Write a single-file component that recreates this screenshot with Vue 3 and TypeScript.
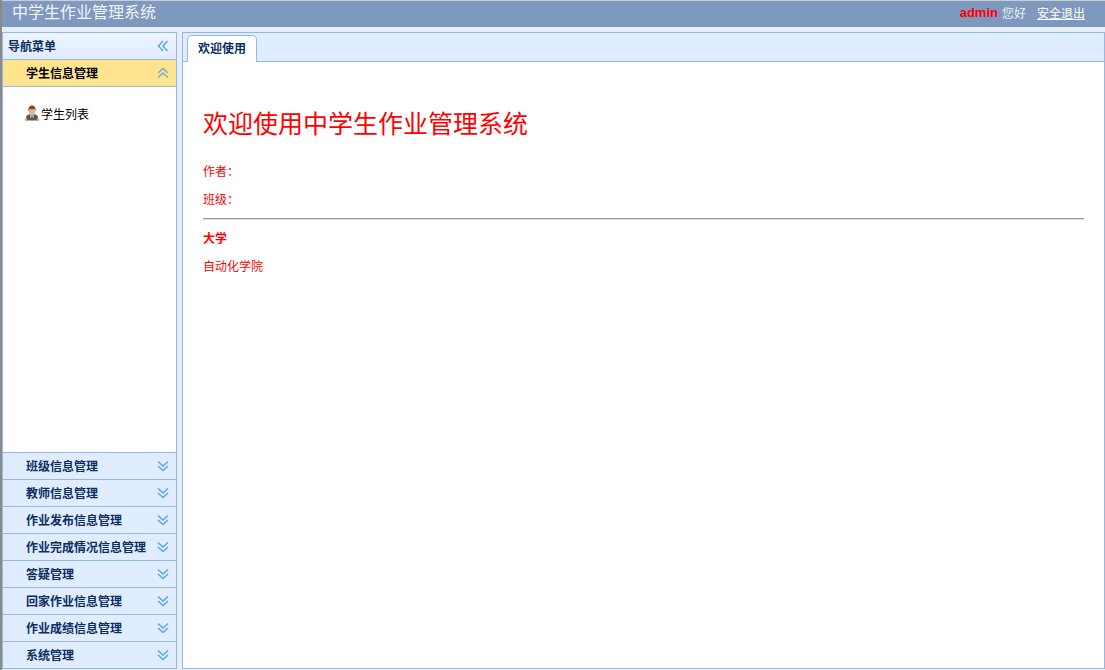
<script setup lang="ts">
const closedMenus: string[] = ['班级信息管理', '教师信息管理', '作业发布信息管理', '作业完成情况信息管理', '答疑管理', '回家作业信息管理', '作业成绩信息管理', '系统管理']
</script>

<template>
  <div class="page">
    <header class="top">
      <div class="brand">中学生作业管理系统</div>
      <div class="user"><b class="name">admin</b><span class="hello">您好</span><a class="logout">安全退出</a></div>
    </header>
    <div class="main">
      <aside class="west">
        <div class="west-title">
          <span>导航菜单</span>
          <svg class="chev" width="12" height="12" viewBox="0 0 12 12"><path d="M6 1 1.500 6 6 11M10.500 1 6 6l4.500 5" fill="none" stroke="#5aa6ea" stroke-width="1.500"/></svg>
        </div>
        <div class="acc-head open">
          <span>学生信息管理</span>
          <svg class="chev" width="12" height="12" viewBox="0 0 12 12"><path d="M1 6 6 1.500 11 6M1 10.500 6 6l5 4.500" fill="none" stroke="#6bb0cf" stroke-width="1.500"/></svg>
        </div>
        <div class="acc-body">
          <div class="tree-item">
            <svg class="person" width="16" height="16" viewBox="0 0 16 16">
              <path d="M2 15.500v-3C2 10.500 4 9.500 6 9h4c2 .5 4 1.500 4 3.500v3z" fill="#55565a"/>
              <path d="M5.200 9.300 6.800 14l1.200-3 1.200 3 1.600-4.700L9.500 9h-3z" fill="#a5a7ab"/>
              <path d="M.8 15.500c-.3-1.300.3-2.600 1.700-3l1.200 3zM15.200 15.500c.3-1.300-.3-2.600-1.700-3l-1.200 3z" fill="#d6a57a"/>
              <path d="M5 4.500h6V7c0 1.700-1.300 3-3 3S5 8.700 5 7z" fill="#e7b48c"/>
              <path d="M4.500 7C3.900 2.500 5.500.5 8 .5s4.100 2 3.500 6.500c-.3-1.500-.8-2.600-1.500-3-1.200.7-3 .7-4 0-.7.5-1.200 1.500-1.500 3z" fill="#8a4a25"/>
            </svg>
            <span>学生列表</span>
          </div>
        </div>
        <div v-for="menu in closedMenus" :key="menu" class="acc-head">
          <span>{{ menu }}</span>
          <svg class="chev down" width="12" height="12" viewBox="0 0 12 12"><path d="M1 1.500 6 6l5-4.500M1 6l5 4.500L11 6" fill="none" stroke="#5aa6ea" stroke-width="1.500"/></svg>
        </div>
      </aside>
      <section class="center">
        <div class="tabs">
          <div class="tab">欢迎使用</div>
        </div>
        <div class="content">
          <h1>欢迎使用中学生作业管理系统</h1>
          <p>作者：</p>
          <p>班级：</p>
          <hr />
          <p class="bold">大学</p>
          <p>自动化学院</p>
        </div>
      </section>
    </div>
  </div>
</template>

<style>
html, body { margin: 0; padding: 0; overflow: hidden; }
</style>

<style scoped>
.page {
  width: 1105px;
  height: 670px;
  display: flex;
  flex-direction: column;
  background: #e6eef8;
  font-family: "Liberation Sans", "Noto Sans CJK SC", sans-serif;
  font-size: 12px;
  border-left: 2px solid #8a8a8a;
  box-sizing: border-box;
  overflow: hidden;
}
.top {
  height: 27px;
  flex: none;
  box-sizing: border-box;
  border-top: 1px solid #c8ced6;
  background: #7f99be;
  display: flex;
  justify-content: space-between;
  align-items: center;
  padding: 0 20px 2px 10px;
  color: #fff;
}
.brand { font-size: 16px; line-height: 20px; color: #f2f5fa; }
.user { display: flex; align-items: center; font-size: 13px; margin-top: -2px; }
.name { color: #f00; font-size: 13px; margin-right: 1px; }
.hello { margin-left: 3px; font-size: 12px; color: #eef2f8; }
.logout { margin-left: 11px; font-size: 12px; text-decoration: underline; color: #fff; }
.main {
  flex: 1;
  display: flex;
  gap: 5px;
  padding-top: 5px;
  min-height: 0;
}
.west {
  width: 175px;
  flex: none;
  box-sizing: border-box;
  border: 1px solid #95b8e7;
  height: 637px;
  display: flex;
  flex-direction: column;
  background: #fff;
}
.west-title {
  height: 26px;
  flex: none;
  box-sizing: border-box;
  background: linear-gradient(to bottom, #eff5ff, #e0ecff);
  display: flex;
  align-items: center;
  justify-content: space-between;
  padding: 0 7px 1px 5px;
  font-weight: bold;
  color: #0e2d5f;
}
.acc-head {
  height: 27px;
  flex: none;
  box-sizing: border-box;
  border-top: 1px solid #95b8e7;
  background: #e0ecff;
  display: flex;
  align-items: center;
  justify-content: space-between;
  padding: 0 7px 2px 23px;
  font-weight: bold;
  color: #0e2d5f;
}
.acc-head.open {
  background: #ffe48d;
  color: #000;
  border-bottom: 1px solid #95b8e7;
  height: 28px;
  padding-bottom: 1px;
}
.chev.down { margin-top: 2px; }
.acc-body {
  flex: 1;
  min-height: 0;
  padding-top: 17px;
  box-sizing: border-box;
}
.tree-item {
  display: flex;
  align-items: center;
  height: 18px;
  padding-left: 21px;
  gap: 1px;
  color: #000;
}
.center {
  width: 923px;
  flex: none;
  height: 637px;
  box-sizing: border-box;
  border: 1px solid #95b8e7;
  display: flex;
  flex-direction: column;
  background: #fff;
}
.tabs {
  height: 29px;
  flex: none;
  box-sizing: border-box;
  background: #e0ecff;
  border-bottom: 1px solid #95b8e7;
  padding: 2px 0 0 4px;
}
.tab {
  width: 70px;
  height: 27px;
  box-sizing: border-box;
  border: 1px solid #95b8e7;
  border-bottom: none;
  border-radius: 5px 5px 0 0;
  background: #fff;
  color: #0e2d5f;
  font-weight: bold;
  text-align: center;
  line-height: 26px;
}
.content {
  flex: 1;
  padding: 0 20px;
  color: #f00;
}
h1 {
  margin: 45px 0 0;
  font-size: 25px;
  line-height: 34px;
  font-weight: normal;
}
p {
  margin: 20px 0 0;
  line-height: 16px;
}
h1 + p { margin-top: 23px; }
p + p { margin-top: 12px; }
hr {
  margin: 10px 0 0;
  border: none;
  border-top: 1px solid #999;
  border-bottom: 1px solid #ddd;
}
.bold { font-weight: bold; margin-top: 11px; }
</style>
